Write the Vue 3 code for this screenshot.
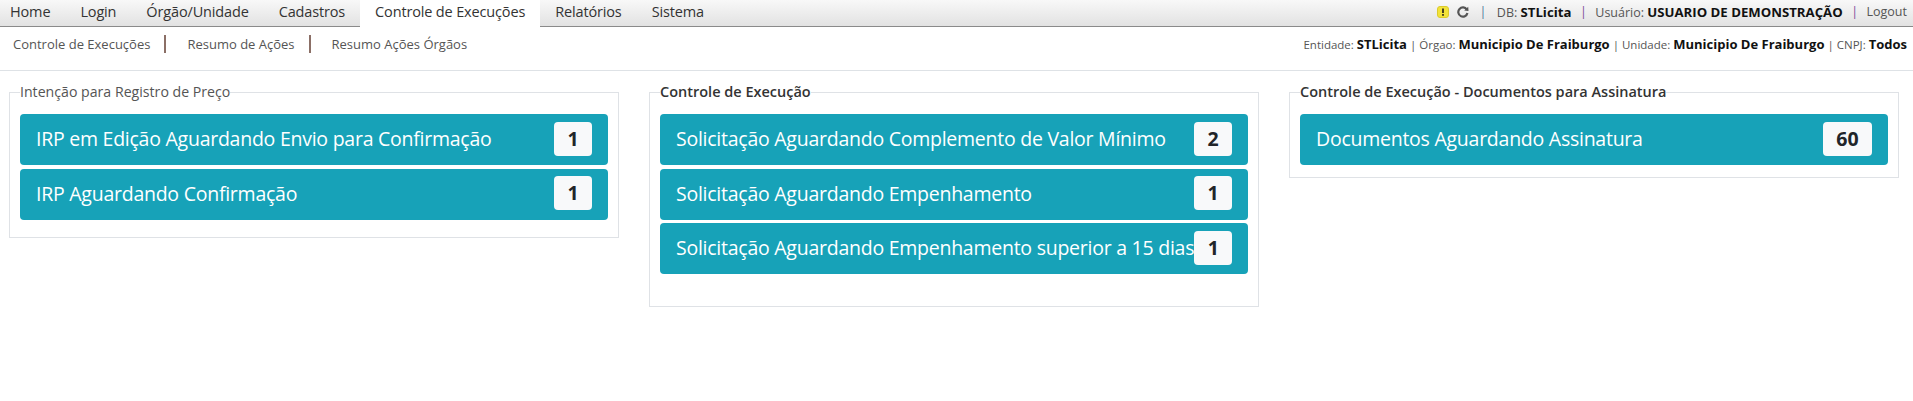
<script setup>
const navItems = ['Home', 'Login', 'Órgão/Unidade', 'Cadastros', 'Controle de Execuções', 'Relatórios', 'Sistema']
const subItems = ['Controle de Execuções', 'Resumo de Ações', 'Resumo Ações Órgãos']
const panels = [
  { title: 'Intenção para Registro de Preço', plain: true, size: 'mid', items: [
    ['IRP em Edição Aguardando Envio para Confirmação', 1],
    ['IRP Aguardando Confirmação', 1]] },
  { title: 'Controle de Execução', size: 'tall', items: [
    ['Solicitação Aguardando Complemento de Valor Mínimo', 2],
    ['Solicitação Aguardando Empenhamento', 1],
    ['Solicitação Aguardando Empenhamento superior a 15 dias', 1]] },
  { title: 'Controle de Execução - Documentos para Assinatura', size: 'short', items: [
    ['Documentos Aguardando Assinatura', 60]] }
]
</script>

<template>
  <div class="page">
    <header class="topbar">
      <nav class="nav">
        <a v-for="n in navItems" :key="n" class="nav-item" :class="{ active: n === 'Controle de Execuções' }">{{ n }}</a>
      </nav>
      <div class="status">
        <svg class="warn" width="12" height="12" viewBox="0 0 12 12"><rect x="0.5" y="0.5" width="11" height="11" rx="2.5" fill="#f2e33a" stroke="#dccb2c"/><rect x="5" y="2.5" width="2" height="4.5" fill="#4a4420"/><rect x="5" y="8" width="2" height="1.8" fill="#4a4420"/></svg>
        <svg class="reload" width="12" height="12" viewBox="0 0 12 12"><path d="M9.8 3.6A4.6 4.6 0 1 0 10.4 7" fill="none" stroke="#555" stroke-width="2.2"/><path d="M7.2 4.6 11.5 5 11.2 0.8Z" fill="#555"/></svg>
        <span class="sep first">|</span>
        <span>DB: <b>STLicita</b></span>
        <span class="sep purple">|</span>
        <span>Usuário: <b>USUARIO DE DEMONSTRAÇÃO</b></span>
        <span class="sep purple">|</span>
        <span>Logout</span>
      </div>
    </header>
    <div class="subbar">
      <div class="sublinks">
        <a v-for="s in subItems" :key="s" class="sublink">{{ s }}</a>
      </div>
      <div class="context">
        Entidade: <b>STLicita</b> | Órgao: <b>Municipio De Fraiburgo</b> | Unidade: <b>Municipio De Fraiburgo</b> | CNPJ: <b>Todos</b>
      </div>
    </div>
    <main class="panels">
      <fieldset v-for="p in panels" :key="p.title" class="panel" :class="p.size">
        <legend :class="{ plain: p.plain }">{{ p.title }}</legend>
        <div class="rows">
          <div v-for="it in p.items" :key="it[0]" class="row">
            <span class="label">{{ it[0] }}</span>
            <span class="badge">{{ it[1] }}</span>
          </div>
        </div>
      </fieldset>
    </main>
  </div>
</template>

<style>
html, body { margin: 0; background: #fff; }
</style>

<style scoped>
.page { font-family: "Open Sans", "Noto Sans", sans-serif; color: #212529; width: 1913px; height: 401px; overflow: hidden; background: #fff; }
.topbar { height: 26px; display: flex; justify-content: space-between; align-items: stretch; background: linear-gradient(#f8f8f8, #e2e2e2); border-bottom: 1px solid #8a8a8a; font-size: 14.5px; letter-spacing: -0.15px; }
.nav { display: flex; }
.nav-item { padding: 0 15px; line-height: 24px; color: #333; white-space: nowrap; }
.nav-item:first-child { padding-left: 10px; }
.nav-item.active { background: #fff; height: 27px; }
.status { display: flex; align-items: center; gap: 8.5px; padding: 0 6px 3px 0; font-size: 12.5px; letter-spacing: 0; color: #555; white-space: nowrap; }
.status b { color: #111; font-size: 13.2px; }
.warn { margin-right: -0.5px; }
.reload { margin-right: 2px; }
.sep { color: #4a7a9a; }
.sep.first { margin-right: 2px; }
.sep.purple { color: #7a4a9a; }
.subbar { height: 43px; display: flex; justify-content: space-between; border-bottom: 1px solid #dee2e6; font-size: 11.5px; color: #555; }
.sublinks { display: flex; padding: 8px 0 0 13px; align-items: flex-start; font-size: 13px; }
.sublink { padding-right: 14px; margin-right: 21px; border-right: 2px solid #8b6f66; line-height: 18px; white-space: nowrap; }
.sublink:last-child { border: 0; }
.context { padding: 7px 6px 0 0; line-height: 20px; white-space: nowrap; }
.context b { color: #111; font-size: 13px; }
.panels { display: grid; grid-template-columns: repeat(3, 610px); column-gap: 30px; padding: 12px 0 0 9px; align-items: start; }
.panel { margin: 0; padding: 13px 10px 17px; border: 1px solid #dfe2e6; min-width: 0; }
.panel.tall { padding-bottom: 32px; }
.panel.short { padding-bottom: 12px; }
legend { padding: 0; font-size: 14.5px; font-weight: 600; line-height: 18px; color: #333; }
legend.plain { font-size: 14.15px; font-weight: 400; color: #555; }
.rows { display: flex; flex-direction: column; gap: 3.5px; }
.row { height: 51px; background: #17a2b8; border-radius: 4px; display: flex; align-items: center; justify-content: space-between; padding: 0 16px; color: #fff; font-size: 19.5px; letter-spacing: -0.25px; white-space: nowrap; }
.label { margin-bottom: 2px; }
.badge { min-width: 38px; margin-bottom: 2px; padding: 0 12px; box-sizing: border-box; height: 34px; line-height: 34px; text-align: center; background: #f8f9fa; color: #212529; font-weight: 700; border-radius: 4px; font-size: 19.5px; letter-spacing: 0; }
.row:only-child .badge { padding: 0 12.5px; min-width: 49px; }
</style>
